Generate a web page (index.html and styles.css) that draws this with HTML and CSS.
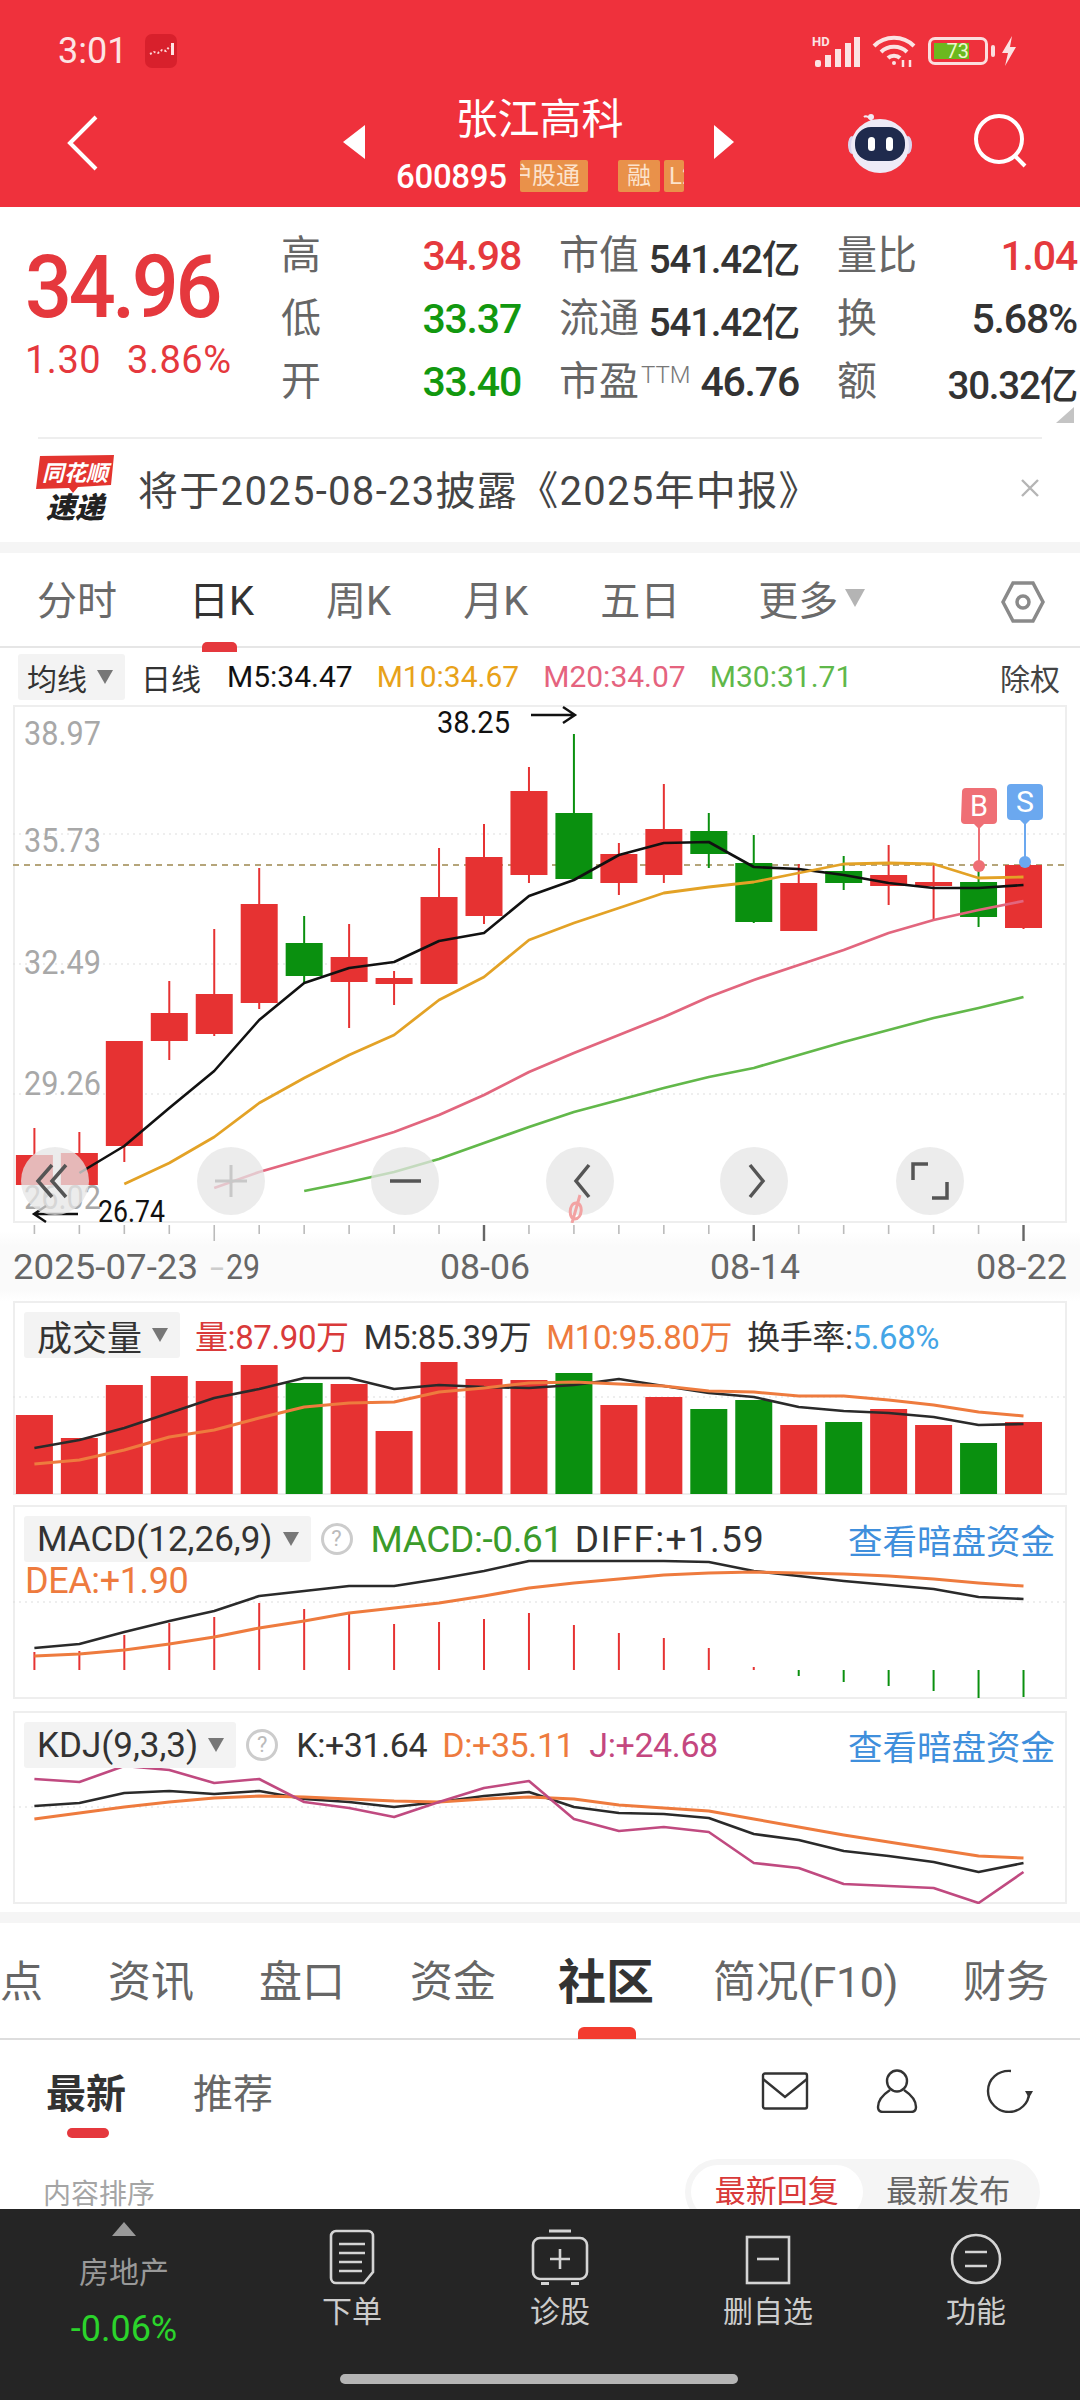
FILE: index.html
```html
<!DOCTYPE html>
<html lang="zh-CN">
<head>
  <meta charset="UTF-8">
  <meta name="viewport" content="width=device-width, initial-scale=1.0">
  <title>张江高科 600895</title>
  <link rel="stylesheet" href="styles.css">
</head>
<body>
  <div class="page">

    <div class="top">
      <div class="status">
        <span class="clock">3:01</span>
        <svg class="app-dot" width="32" height="34" viewBox="0 0 32 34">
          <rect width="32" height="34" rx="7" fill="#d8202c"/>
          <path d="M5 20l4-2 4 1 4-3 4 1 4-5" fill="none" stroke="#ffd5d5" stroke-width="2" stroke-dasharray="2 2"/>
          <rect x="26" y="9" width="3" height="12" fill="#ffe3e3"/>
        </svg>
        <div class="status-right">
          <svg width="48" height="32" viewBox="0 0 48 32">
            <text x="0" y="11" class="hd">HD</text>
            <rect x="3" y="25" width="6" height="7" rx="2" fill="#fbe3e3"/>
            <rect x="13" y="20" width="6" height="12" fill="#fbe3e3"/>
            <rect x="23" y="14" width="6" height="18" fill="#fbe3e3"/>
            <rect x="33" y="8" width="6" height="24" fill="#fbe3e3"/>
            <rect x="42" y="2" width="6" height="30" fill="#fbe3e3"/>
          </svg>
          <svg width="44" height="32" viewBox="0 0 44 32" fill="none" stroke="#fbe3e3" stroke-width="4">
            <path d="M2 11c11-11 29-11 40 0"/>
            <path d="M9 17c7-7 19-7 26 0"/>
            <path d="M16 23c3-3 9-3 12 0"/>
            <circle cx="22" cy="28" r="2" fill="#fbe3e3" stroke="none"/>
            <path d="M31 25v7M38 25v7" stroke-width="2.5"/>
          </svg>
          <div class="battery">
            <div class="battery-body"><span class="battery-fill">73</span></div>
            <span class="battery-cap"></span>
          </div>
          <svg class="bolt" width="16" height="30" viewBox="0 0 16 30">
            <path d="M11 0L1 17h6l-3 13L15 11H9z" fill="#fbe3e3"/>
          </svg>
        </div>
      </div>

      <div class="nav">
        <div class="nav-left">
          <svg width="32" height="56" viewBox="0 0 32 56" fill="none" stroke="#fff" stroke-width="4">
            <path d="M29 2L3 28l26 26"/>
          </svg>
        </div>
        <div class="nav-center">
          <span class="tri-left"></span>
          <div class="stock">
            <div class="stock-name">张江高科</div>
            <div class="stock-sub">
              <span class="stock-code">600895</span>
              <span class="badge badge-hgt">沪股通</span>
              <span class="badge badge-rong">融</span>
              <span class="badge badge-l">L2</span>
            </div>
          </div>
          <span class="tri-right"></span>
        </div>
        <div class="nav-right">
          <svg width="64" height="60" viewBox="0 0 64 60">
            <path d="M25 10c-3-6-7-8-9-6" fill="none" stroke="#f3e9f3" stroke-width="2"/>
            <circle cx="23" cy="4" r="3" fill="#f3e9f3"/>
            <ellipse cx="4" cy="32" rx="4" ry="9" fill="#d8d4ee"/>
            <ellipse cx="60" cy="32" rx="4" ry="9" fill="#d8d4ee"/>
            <ellipse cx="32" cy="33" rx="29" ry="27" fill="#eeeaf6"/>
            <rect x="7" y="14" width="50" height="34" rx="16" fill="#1f2a4d"/>
            <rect x="20" y="24" width="7" height="14" rx="3.5" fill="#fff"/>
            <rect x="38" y="24" width="7" height="14" rx="3.5" fill="#fff"/>
          </svg>
          <svg width="54" height="58" viewBox="0 0 54 58" fill="none" stroke="#fff" stroke-width="4">
            <circle cx="25" cy="26" r="23"/>
            <path d="M41 43l10 10"/>
          </svg>
        </div>
      </div>
    </div>

    <div class="quote">
      <div class="price-box">
        <div class="price">34.96</div>
        <div class="price-change"><span>1.30</span><span>3.86%</span></div>
      </div>
      <div class="stats">
        <div class="cell"><span class="lab">高</span><span class="val up">34.98</span></div>
        <div class="cell"><span class="lab">市值</span><span class="val val-yi">541.42亿</span></div>
        <div class="cell"><span class="lab">量比</span><span class="val up">1.04</span></div>
        <div class="cell"><span class="lab">低</span><span class="val down">33.37</span></div>
        <div class="cell"><span class="lab">流通</span><span class="val val-yi">541.42亿</span></div>
        <div class="cell"><span class="lab">换</span><span class="val">5.68%</span></div>
        <div class="cell"><span class="lab">开</span><span class="val down">33.40</span></div>
        <div class="cell"><span class="lab">市盈<sup class="ttm">TTM</sup></span><span class="val">46.76</span></div>
        <div class="cell"><span class="lab">额</span><span class="val val-yi">30.32亿</span></div>
      </div>
      <span class="corner"></span>
    </div>

    <div class="news">
      <svg class="news-logo" width="78" height="66" viewBox="0 0 78 66">
        <path d="M4 1l74-1-3 30-33 2-5 6-4-5-33 1z" fill="#e3342f"/>
        <text x="39" y="26" text-anchor="middle" class="logo-a">同花顺</text>
        <text x="39" y="63" text-anchor="middle" class="logo-b">速递</text>
      </svg>
      <div class="news-text">将于2025-08-23披露《2025年中报》</div>
      <svg width="20" height="20" viewBox="0 0 20 20" stroke="#b5b5b5" stroke-width="2.4">
        <path d="M2 2l16 16M18 2L2 18"/>
      </svg>
    </div>

    <div class="band"></div>

    <div class="tabs">
      <span class="tab">分时</span>
      <span class="tab active">日K</span>
      <span class="tab">周K</span>
      <span class="tab">月K</span>
      <span class="tab">五日</span>
      <span class="tab tab-more">更多<i class="drop drop-big"></i></span>
      <svg class="tab-gear" width="44" height="42" viewBox="0 0 44 42" fill="none" stroke="#8a8a8a" stroke-width="3.5">
        <path d="M12 2h20l10 19-10 19H12L2 21z"/>
        <circle cx="22" cy="21" r="6"/>
      </svg>
    </div>

    <div class="ma-row">
      <span class="picker ma-picker">均线<i class="drop"></i></span>
      <span class="ma-text ma-day">日线</span>
      <span class="ma-text ma5">M5:34.47</span>
      <span class="ma-text ma10">M10:34.67</span>
      <span class="ma-text ma20">M20:34.07</span>
      <span class="ma-text ma30">M30:31.71</span>
      <span class="ma-text ma-right">除权</span>
    </div>

    <!-- K line panel -->
    <div class="panel panel-price">
      <svg class="panel-svg" width="1054" height="518" viewBox="13 705 1054 518">
        <path class="grid-lines" d="M13 834H1067M13 964H1067M13 1094H1067"/>
        <path class="last-line" d="M13 865H1067"/>
        <g class="axis">
          <text x="24" y="745" textLength="77" lengthAdjust="spacingAndGlyphs">38.97</text>
          <text x="24" y="852" textLength="77" lengthAdjust="spacingAndGlyphs">35.73</text>
          <text x="24" y="974" textLength="77" lengthAdjust="spacingAndGlyphs">32.49</text>
          <text x="24" y="1095" textLength="77" lengthAdjust="spacingAndGlyphs">29.26</text>
          <text x="24" y="1209" textLength="77" lengthAdjust="spacingAndGlyphs">26.02</text>
        </g>
        <g id="candles"></g>
        <g id="priceLines"></g>

        <g class="note">
          <text x="437" y="733" textLength="73" lengthAdjust="spacingAndGlyphs">38.25</text>
          <path d="M531 715h43M563 707l12 8-12 8"/>
          <text x="98" y="1222" textLength="67" lengthAdjust="spacingAndGlyphs">26.74</text>
          <path d="M78 1214H34M46 1206l-12 8 12 8"/>
        </g>

        <g class="marker">
          <path d="M979 824V865" stroke="#ef6f75"/>
          <circle cx="979" cy="866" r="6" fill="#ef6f75"/>
          <path d="M962 792a4 4 0 0 1 4-4h27a4 4 0 0 1 4 4v28a4 4 0 0 1-4 4h-9l-5 5-5-5h-9a4 4 0 0 1-4-4z" fill="#ef6f75"/>
          <text x="979" y="816" textLength="18" lengthAdjust="spacingAndGlyphs" text-anchor="middle">B</text>
          <path d="M1025 820V860" stroke="#6ba8ef"/>
          <circle cx="1025" cy="862" r="6" fill="#6ba8ef"/>
          <path d="M1007 788a4 4 0 0 1 4-4h28a4 4 0 0 1 4 4v28a4 4 0 0 1-4 4h-9l-5 5-5-5h-9a4 4 0 0 1-4-4z" fill="#6ba8ef"/>
          <text x="1025" y="812" textLength="18" lengthAdjust="spacingAndGlyphs" text-anchor="middle">S</text>
        </g>

        <!-- zoom and pan buttons floating over the chart -->
        <g class="pad">
          <circle cx="55" cy="1181" r="34"/>
          <circle cx="231" cy="1181" r="34"/>
          <circle cx="405" cy="1181" r="34"/>
          <circle cx="580" cy="1181" r="34"/>
          <circle cx="754" cy="1181" r="34"/>
          <circle cx="930" cy="1181" r="34"/>
        </g>
        <g class="pad-icons">
          <path d="M52 1165l-14 16 14 16M66 1165l-14 16 14 16"/>
          <path class="pad-soft" d="M215 1181h32M231 1165v32"/>
          <path d="M390 1181h31"/>
          <path d="M589 1165l-13 16 13 16"/>
          <path d="M750 1165l13 16-13 16"/>
          <path d="M913 1180v-16h15M947 1182v16h-15"/>
        </g>
        <path class="pink-mark" d="M576 1203c-7 0-8 16-1 16s9-16 1-16zM580 1195l-8 28"/>
      </svg>
    </div>

    <svg class="time-axis" width="1080" height="78" viewBox="0 1223 1080 78">
      <g id="ticks"></g>
      <g class="dates">
        <text x="13" y="1279" textLength="185" lengthAdjust="spacingAndGlyphs">2025-07-23</text>
        <text x="210" y="1279" textLength="14" lengthAdjust="spacingAndGlyphs" class="dim">-</text>
        <text x="226" y="1279" textLength="34" lengthAdjust="spacingAndGlyphs">29</text>
        <text x="440" y="1279" textLength="90" lengthAdjust="spacingAndGlyphs">08-06</text>
        <text x="710" y="1279" textLength="90" lengthAdjust="spacingAndGlyphs">08-14</text>
        <text x="976" y="1279" textLength="91" lengthAdjust="spacingAndGlyphs">08-22</text>
      </g>
    </svg>

    <!-- volume -->
    <div class="panel panel-vol">
      <svg class="panel-svg" width="1054" height="194" viewBox="13 1301 1054 194">
        <path class="grid-lines" d="M13 1397H1067"/>
        <g id="volBars"></g>
        <g id="volLines"></g>
      </svg>
      <div class="panel-head">
        <span class="picker">成交量<i class="drop"></i></span>
        <span class="v-red">量:87.90万</span>
        <span class="v-dark">M5:85.39万</span>
        <span class="v-orange">M10:95.80万</span>
        <span class="v-dark">换手率:<b class="v-blue">5.68%</b></span>
      </div>
    </div>

    <div class="panel panel-macd">
      <svg class="panel-svg" width="1054" height="194" viewBox="13 1505 1054 194">
        <path class="grid-lines" d="M13 1602H1067"/>
        <g id="macdBars"></g>
        <g id="macdLines"></g>
      </svg>
      <div class="panel-head">
        <span class="picker">MACD(12,26,9)<i class="drop"></i></span>
        <span class="help">?</span>
        <span class="v-green">MACD:-0.61</span>
        <span class="v-dark">DIFF:+1.59</span>
        <span class="v-link">查看暗盘资金</span>
      </div>
      <div class="panel-sub v-orange">DEA:+1.90</div>
    </div>

    <div class="panel panel-kdj">
      <svg class="panel-svg" width="1054" height="193" viewBox="13 1711 1054 193">
        <path class="grid-lines" d="M13 1807H1067"/>
        <g id="kdjLines"></g>
      </svg>
      <div class="panel-head">
        <span class="picker">KDJ(9,3,3)<i class="drop"></i></span>
        <span class="help">?</span>
        <span class="v-dark">K:+31.64</span>
        <span class="v-orange">D:+35.11</span>
        <span class="v-pink">J:+24.68</span>
        <span class="v-link">查看暗盘资金</span>
      </div>
    </div>

    <div class="band band-low"></div>

    <div class="sections">
      <span>点</span>
      <span>资讯</span>
      <span>盘口</span>
      <span>资金</span>
      <span class="active">社区</span>
      <span class="sec-f10">简况(F10)</span>
      <span>财务</span>
    </div>

    <div class="community">
      <div class="comm-head">
        <span class="comm-tab active">最新</span>
        <span class="comm-tab">推荐</span>
        <div class="comm-icons">
          <svg width="48" height="38" viewBox="0 0 48 38" fill="none" stroke="#333" stroke-width="2.4">
            <rect x="2" y="1.5" width="44" height="35" rx="2"/>
            <path d="M2 7l22 18L46 7"/>
          </svg>
          <svg width="42" height="44" viewBox="0 0 42 44" fill="none" stroke="#333" stroke-width="2.4">
            <ellipse cx="21" cy="12" rx="10" ry="10.5"/>
            <path d="M14 21C8 25 2 31 2 38c0 3 2 5 5 5h28c3 0 5-2 5-5 0-7-6-13-12-17"/>
          </svg>
          <svg width="48" height="44" viewBox="0 0 48 44" fill="none" stroke="#333" stroke-width="2.4">
            <path d="M26 2C13 1 3 10 3 22s10 21 21 21c11 0 20-9 20-19"/>
            <path d="M40 22h8l-4 7z" fill="#333" stroke="none"/>
          </svg>
        </div>
      </div>
      <div class="comm-sort">
        <span class="sort-label">内容排序</span>
        <div class="segment">
          <span class="seg on">最新回复</span>
          <span class="seg">最新发布</span>
        </div>
      </div>
    </div>

    <div class="dock">
      <div class="dock-sector">
        <span class="dock-tri"></span>
        <span class="sector-name">房地产</span>
        <span class="sector-pct">-0.06%</span>
      </div>
      <div class="dock-item">
        <svg width="48" height="56" viewBox="0 0 48 56" fill="none" stroke="#d4d4d4" stroke-width="2.6">
          <path d="M8 2h32a5 5 0 0 1 5 5v36l-9 11H8a5 5 0 0 1-5-5V7a5 5 0 0 1 5-5z"/>
          <path d="M11 15h26M11 24h26M11 33h23M11 42h23"/>
        </svg>
        <span>下单</span>
      </div>
      <div class="dock-item">
        <svg width="58" height="56" viewBox="0 0 58 56" fill="none" stroke="#d4d4d4" stroke-width="2.6">
          <path d="M18 2h22" stroke-width="3"/>
          <rect x="2" y="9" width="54" height="41" rx="7"/>
          <path d="M29 20v20M19 30h20"/>
          <path d="M10 55h8M40 55h8" stroke-width="4"/>
        </svg>
        <span>诊股</span>
      </div>
      <div class="dock-item">
        <svg width="46" height="50" viewBox="0 0 46 50" fill="none" stroke="#d4d4d4" stroke-width="2.6">
          <rect x="2" y="2" width="42" height="46"/>
          <path d="M12 24h22"/>
        </svg>
        <span>删自选</span>
      </div>
      <div class="dock-item">
        <svg width="52" height="52" viewBox="0 0 52 52" fill="none" stroke="#d4d4d4" stroke-width="2.6">
          <circle cx="26" cy="26" r="24"/>
          <path d="M15 19h22M15 33h22"/>
        </svg>
        <span>功能</span>
      </div>
      <div class="home-bar"></div>
    </div>

  </div>

  <script>
    const NS = 'http://www.w3.org/2000/svg';
    const xAt = (i) => 34.4 + 44.96 * i;

    function add(parentId, tag, attrs) {
      const el = document.createElementNS(NS, tag);
      for (const k in attrs) el.setAttribute(k, attrs[k]);
      document.getElementById(parentId).appendChild(el);
    }

    function line(parentId, ys, color, width, start = 0) {
      const pts = ys.map((y, i) => `${xAt(i + start).toFixed(1)},${y}`).join(' ');
      add(parentId, 'polyline', { points: pts, fill: 'none', stroke: color, 'stroke-width': width, 'stroke-linejoin': 'round' });
    }

    const RED = '#e63232';
    const GREEN = '#0a900f';

    // [color, body top, body bottom, wick top, wick bottom]
    const candles = [
      ['r', 1155, 1185, 1128, 1185], ['r', 1153, 1185, 1132, 1185], ['r', 1041, 1146, 1041, 1162],
      ['r', 1013, 1041, 981, 1060], ['r', 994, 1034, 929, 1036], ['r', 904, 1003, 868, 1009],
      ['g', 943, 976, 916, 983], ['r', 957, 982, 924, 1028], ['r', 978, 984, 971, 1005],
      ['r', 897, 984, 848, 984], ['r', 857, 916, 824, 924], ['r', 791, 875, 767, 883],
      ['g', 813, 879, 734, 879], ['r', 854, 883, 843, 895], ['r', 829, 875, 784, 883],
      ['g', 831, 854, 813, 868], ['g', 863, 922, 835, 923], ['r', 883, 931, 864, 931],
      ['g', 871, 883, 856, 890], ['r', 875, 886, 845, 905], ['r', 882, 886, 863, 920],
      ['g', 882, 917, 867, 927], ['r', 865, 928, 865, 929]
    ];

    candles.forEach((c, i) => {
      const x = xAt(i);
      const color = c[0] === 'r' ? RED : GREEN;
      add('candles', 'path', { d: `M${x} ${c[3]}V${c[4]}`, stroke: color, 'stroke-width': 2 });
      add('candles', 'rect', { x: x - 18.5, y: c[1], width: 37, height: c[2] - c[1], fill: color });
    });

    line('priceLines', [1173, 1146, 1108, 1071, 1020, 983, 968, 962, 941, 933, 896, 880, 855, 843, 842, 867, 869, 875, 883, 888, 888, 885], '#111', 2.6, 1);
    line('priceLines', [1184, 1163, 1137, 1103, 1078, 1055, 1035, 1000, 977, 940, 923, 908, 893, 887, 882, 873, 864, 863, 864, 878, 877], '#e3a226', 2.8, 2);
    line('priceLines', [1188, 1172, 1159, 1146, 1132, 1115, 1095, 1072, 1053, 1035, 1017, 997, 980, 965, 950, 933, 920, 910, 901], '#e2667e', 2.8, 4);
    line('priceLines', [1191, 1182, 1172, 1159, 1143, 1127, 1112, 1100, 1088, 1077, 1068, 1055, 1042, 1030, 1018, 1008, 997], '#62b84a', 2.8, 6);

    candles.forEach((c, i) => {
      const major = i === 10 || i === 16 || i === 22;
      const tall = major || i === 4;
      add('ticks', 'path', {
        d: `M${xAt(i)} 1225v${tall ? 16 : 9}`,
        stroke: major ? '#666' : '#bbb',
        'stroke-width': major ? 2.4 : 1.6
      });
    });

    const volumes = [1415, 1438, 1385, 1376, 1381, 1365, 1383, 1384, 1431, 1362, 1379, 1380, 1373, 1405, 1397, 1409, 1400, 1425, 1422, 1409, 1425, 1443, 1422];
    const volUp = [1, 1, 1, 1, 1, 1, 0, 1, 1, 1, 1, 1, 0, 1, 1, 0, 0, 1, 0, 1, 1, 0, 1];
    volumes.forEach((top, i) => {
      add('volBars', 'rect', { x: xAt(i) - 18.5, y: top, width: 37, height: 1494 - top, fill: volUp[i] ? RED : GREEN });
    });
    line('volLines', [1448, 1440, 1428, 1413, 1398, 1389, 1378, 1378, 1389, 1385, 1387, 1388, 1385, 1379, 1386, 1393, 1397, 1407, 1411, 1413, 1417, 1425, 1424], '#2a2a2a', 2.6);
    line('volLines', [1464, 1460, 1450, 1437, 1430, 1418, 1407, 1403, 1402, 1392, 1388, 1383, 1382, 1384, 1386, 1391, 1392, 1396, 1396, 1400, 1405, 1412, 1416], '#ee7b3e', 3);

    const macd = [1652, 1651, 1635, 1623, 1617, 1603, 1609, 1614, 1624, 1622, 1619, 1613, 1625, 1633, 1638, 1648, 1667, 1676, 1682, 1686, 1691, 1698, 1697];
    macd.forEach((y, i) => {
      add('macdBars', 'path', { d: `M${xAt(i)} 1670V${y}`, stroke: y < 1670 ? RED : GREEN, 'stroke-width': 2 });
    });
    line('macdLines', [1648, 1644, 1632, 1621, 1611, 1596, 1591, 1586, 1586, 1579, 1571, 1561, 1561, 1561, 1561, 1562, 1571, 1576, 1581, 1585, 1589, 1597, 1599], '#2a2a2a', 2.6);
    line('macdLines', [1656, 1654, 1650, 1644, 1637, 1628, 1621, 1613, 1608, 1603, 1596, 1588, 1583, 1579, 1575, 1573, 1572, 1573, 1574, 1576, 1579, 1583, 1586], '#ee7b3e', 3);

    line('kdjLines', [1806, 1803, 1793, 1791, 1794, 1791, 1799, 1802, 1807, 1802, 1796, 1792, 1807, 1813, 1814, 1818, 1834, 1840, 1851, 1856, 1862, 1872, 1863], '#2a2a2a', 2.6);
    line('kdjLines', [1819, 1813, 1807, 1802, 1798, 1796, 1797, 1799, 1801, 1802, 1799, 1797, 1799, 1805, 1808, 1811, 1819, 1827, 1835, 1842, 1849, 1856, 1858], '#ee7b3e', 3);
    line('kdjLines', [1779, 1782, 1766, 1770, 1783, 1779, 1802, 1808, 1817, 1802, 1788, 1781, 1819, 1831, 1827, 1832, 1863, 1868, 1884, 1886, 1888, 1903, 1872], '#c04a80', 2.6);
  </script>
</body>
</html>
```

FILE: styles.css
```css
* {
  box-sizing: border-box;
}

body {
  margin: 0;
  background: #fff;
  font-family: Roboto, "Noto Sans CJK SC", sans-serif;
  color: #333;
}

.page {
  width: 1080px;
  height: 2400px;
  overflow: hidden;
  position: relative;
}

/* red header */
.top {
  height: 207px;
  background: #ef313c;
  color: #fff;
}

.status {
  height: 92px;
  display: flex;
  align-items: center;
  padding: 10px 63px 0 58px;
}

.clock {
  font-size: 36px;
  color: #fce4e4;
}

.app-dot {
  margin-left: 18px;
}

.status-right {
  margin-left: auto;
  display: flex;
  align-items: center;
  gap: 12px;
}

.bolt {
  margin-left: -6px;
}

.hd {
  font-size: 13px;
  font-weight: 700;
  fill: #fbe3e3;
}

.battery {
  display: flex;
  align-items: center;
  gap: 3px;
}

.battery-body {
  width: 60px;
  height: 28px;
  border: 3px solid #fbdede;
  border-radius: 7px;
  padding: 3px;
}

.battery-fill {
  display: block;
  width: 35px;
  height: 16px;
  background: #6cb81f;
  color: #eef8d0;
  font-size: 20px;
  line-height: 16px;
  text-align: right;
}

.battery-cap {
  width: 4px;
  height: 12px;
  border-radius: 2px;
  background: #fbdede;
}

.nav {
  height: 115px;
  display: grid;
  grid-template-columns: 343px 391px 1fr;
}

.nav-left {
  padding: 23px 0 0 67px;
}

.nav-center {
  display: flex;
  align-items: flex-start;
}

.tri-left,
.tri-right {
  width: 0;
  height: 0;
  margin-top: 33px;
  border-top: 17px solid transparent;
  border-bottom: 17px solid transparent;
}

.tri-left {
  border-right: 22px solid #fff;
}

.tri-right {
  border-left: 20px solid #fff;
}

.stock {
  width: 349px;
}

.stock-name {
  height: 52px;
  font-size: 42px;
  line-height: 56px;
  text-align: center;
}

.stock-sub {
  display: flex;
  align-items: center;
  height: 32px;
  margin-top: 16px;
  padding-left: 31px;
}

.stock-code {
  width: 124px;
  font-size: 33px;
  font-weight: 500;
  letter-spacing: -0.3px;
  color: #fff;
}

.badge {
  height: 32px;
  display: flex;
  justify-content: flex-end;
  overflow: hidden;
  white-space: nowrap;
  background: #e9914a;
  color: #fce3cd;
  font-size: 24px;
  line-height: 32px;
  border-radius: 2px;
}

.badge-hgt {
  width: 68px;
  padding-right: 8px;
}

.badge-rong {
  width: 42px;
  margin-left: 30px;
  justify-content: center;
}

.badge-l {
  width: 20px;
  margin-left: 4px;
  justify-content: flex-start;
  padding-left: 5px;
}

.nav-right {
  display: flex;
  align-items: flex-start;
  padding: 21px 0 0 114px;
  gap: 62px;
}

/* quote block */
.quote {
  height: 230px;
  position: relative;
  display: flex;
}

.price-box {
  width: 281px;
  padding: 36px 0 0 25px;
  color: #e5383d;
}

.price {
  font-size: 88px;
  font-weight: 500;
  line-height: 88px;
  letter-spacing: -3.6px;
  transform: scaleX(0.94);
  transform-origin: left;
}

.price-change {
  display: flex;
  gap: 26px;
  margin-top: 7px;
  font-size: 38px;
  line-height: 44px;
  letter-spacing: 0.5px;
}

.stats {
  display: grid;
  grid-template-columns: repeat(3, 240px);
  grid-auto-rows: 63px;
  column-gap: 38px;
  padding-top: 17px;
}

.cell {
  display: flex;
  justify-content: space-between;
  align-items: center;
  white-space: nowrap;
}

.lab {
  margin-bottom: 8px;
  font-size: 40px;
  color: #666;
}

.ttm {
  font-size: 24px;
  font-weight: 300;
  color: #777;
  vertical-align: 12px;
  line-height: 0;
  margin-left: 2px;
}

.val {
  font-size: 41px;
  font-weight: 500;
  letter-spacing: -1.2px;
  color: #333;
}

.val-yi {
  font-size: 38.5px;
}

.up {
  color: #e5393d;
}

.down {
  color: #12980f;
}

.corner {
  position: absolute;
  right: 6px;
  bottom: 14px;
  width: 0;
  height: 0;
  border-left: 18px solid transparent;
  border-bottom: 16px solid #c4c4c4;
}

.news {
  height: 105px;
  margin: 0 38px;
  border-top: 2px solid #eee;
  display: flex;
  align-items: center;
  padding: 0 2px 6px 0;
}

.news-logo {
  margin-left: -2px;
}

.logo-a {
  font-size: 22px;
  font-weight: 700;
  font-style: italic;
  fill: #fff;
}

.logo-b {
  font-size: 29px;
  font-weight: 900;
  font-style: italic;
  fill: #222;
}

.news-text {
  flex: 1;
  margin-left: 24px;
  font-size: 40px;
  letter-spacing: 1.3px;
  color: #444;
}

.band {
  height: 11px;
  background: #f5f5f5;
}

/* period tabs */
.tabs {
  height: 95px;
  display: flex;
  align-items: center;
  gap: 72px;
  padding: 4px 35px 0 37px;
  border-bottom: 2px solid #e6e6e6;
}

.tab {
  position: relative;
  font-size: 40px;
  line-height: 48px;
  color: #6a6a6a;
}

.tab.active {
  color: #333;
}

.tab.active::after {
  content: '';
  position: absolute;
  left: 13px;
  top: 64px;
  width: 35px;
  height: 10px;
  border-radius: 5px 5px 0 0;
  background: #e5383d;
}

.tab-more {
  margin-left: 6px;
}

.tab-gear {
  margin-left: auto;
}

.drop {
  display: inline-block;
  width: 0;
  height: 0;
  margin-left: 10px;
  vertical-align: 3px;
  border-left: 8px solid transparent;
  border-right: 8px solid transparent;
  border-top: 14px solid #777;
}

.drop-big {
  margin-left: 7px;
  vertical-align: 8px;
  border-left-width: 10px;
  border-right-width: 10px;
  border-top: 18px solid #b4b4b4;
}

.ma-row {
  height: 54px;
  display: flex;
  align-items: center;
  padding: 3px 20px 0 18px;
}

.picker {
  height: 46px;
  display: inline-flex;
  align-items: center;
  flex: none;
  padding: 0 12px 0 13px;
  background: #f3f3f3;
  color: #333;
  font-size: 35px;
  letter-spacing: 0;
  border-radius: 3px;
}

.ma-picker {
  width: 107px;
  padding-left: 9px;
  font-size: 30px;
}

.ma-picker .drop {
  margin-left: 10px;
}

.ma-text {
  font-size: 30px;
  margin-left: 24px;
}

.ma-day {
  margin-left: 16px;
  color: #333;
}

.ma5 {
  margin-left: 26px;
  color: #111;
}

.ma10 {
  color: #e8a21a;
}

.ma20 {
  color: #e5637e;
}

.ma30 {
  color: #5fb84a;
}

.ma-right {
  margin-left: auto;
  color: #444;
}

/* chart panels */
.panel {
  position: relative;
  width: 1054px;
  margin-left: 13px;
  border: 2px solid #eee;
}

.panel-price {
  height: 518px;
  margin-top: 3px;
}

.panel-vol,
.panel-macd {
  height: 194px;
}

.panel-macd {
  margin-top: 10px;
}

.panel-kdj {
  height: 193px;
  margin-top: 12px;
}

.panel-svg {
  position: absolute;
  left: -2px;
  top: -2px;
}

.grid-lines {
  fill: none;
  stroke: #ddd;
  stroke-width: 1.2;
  stroke-dasharray: 2 4;
}

.last-line {
  stroke: #b5a57a;
  stroke-width: 2;
  stroke-dasharray: 6 5;
}

.axis text {
  font-size: 34px;
  fill: #a8a8a8;
}

.note text {
  font-size: 32px;
  fill: #111;
}

.note path {
  fill: none;
  stroke: #111;
  stroke-width: 2.4;
}

.marker path[stroke] {
  stroke-width: 2;
}

.marker text {
  font-size: 30px;
  fill: #fff;
}

.pad circle {
  fill: rgba(230, 230, 230, 0.75);
}

.pad-icons path {
  fill: none;
  stroke: #555;
  stroke-width: 3.5;
}

.pad-icons .pad-soft {
  stroke: #c8c8c8;
  stroke-width: 3;
}

.pink-mark {
  fill: none;
  stroke: #f2a3a3;
  stroke-width: 3;
}

.time-axis {
  display: block;
  background: linear-gradient(#fff 10%, #fafafa 30%, #fafafa 85%, #fff);
}

.dates text {
  font-size: 35px;
  fill: #666;
}

.dates .dim {
  fill: #ccc;
}

.panel-head {
  position: relative;
  display: flex;
  align-items: center;
  height: 46px;
  margin: 9px 0 0 9px;
  gap: 15px;
  font-size: 33px;
  letter-spacing: -0.4px;
  white-space: nowrap;
}

.panel-macd .panel-head {
  font-size: 37px;
}

.panel-macd .v-dark {
  margin-left: -3px;
  letter-spacing: 1.3px;
}

.panel-kdj .panel-head {
  font-size: 34px;
}

.panel-macd .picker,
.panel-kdj .picker {
  font-size: 35px;
}

.panel-sub {
  position: relative;
  margin: 0 0 0 10px;
  font-size: 36px;
  line-height: 38px;
  letter-spacing: -0.4px;
}

.help {
  width: 32px;
  height: 32px;
  margin: 0 3px 0 -5px;
  border: 3px solid #ccc;
  border-radius: 50%;
  text-align: center;
  font-size: 22px;
  line-height: 26px;
  color: #bbb;
  letter-spacing: 0;
}

.v-red {
  color: #d93a3a;
}

.v-dark {
  color: #333;
}

.v-orange {
  color: #ee7b3e;
}

.v-blue {
  font-weight: 400;
  color: #45a5e6;
}

.v-green {
  color: #3b9b2a;
}

.v-pink {
  color: #c4477f;
}

.v-link {
  margin-left: auto;
  margin-right: 10px;
  font-size: 34.5px;
  letter-spacing: 0;
  color: #3f8fdc;
}

.band-low {
  margin-top: 8px;
}

/* section tabs */
.sections {
  height: 117px;
  display: flex;
  align-items: center;
  gap: 65px;
  border-bottom: 2px solid #ddd;
  font-size: 43px;
  color: #666;
  padding-bottom: 5px;
}

.sections .active {
  position: relative;
  margin: 0 -6px 0 -3px;
  font-size: 48px;
  font-weight: 700;
  color: #333;
}

.sections .sec-f10 {
  letter-spacing: -0.4px;
}

.sections .active::after {
  content: '';
  position: absolute;
  left: 20px;
  top: 84px;
  width: 58px;
  height: 12px;
  border-radius: 6px 6px 0 0;
  background: #f33c2f;
}

.community {
  height: 169px;
  overflow: hidden;
}

.comm-head {
  height: 102px;
  display: flex;
  align-items: center;
  gap: 67px;
  padding: 0 47px 0 46px;
}

.comm-tab {
  position: relative;
  font-size: 40px;
  color: #666;
}

.comm-tab.active {
  font-weight: 700;
  color: #333;
}

.comm-tab.active::after {
  content: '';
  position: absolute;
  left: 21px;
  top: 66px;
  width: 42px;
  height: 10px;
  border-radius: 5px;
  background: #e5383d;
}

.comm-icons {
  margin-left: auto;
  display: flex;
  align-items: center;
  gap: 67px;
}

.comm-sort {
  display: flex;
  justify-content: space-between;
  align-items: center;
  margin-top: 17px;
  padding: 0 40px 0 43px;
}

.sort-label {
  font-size: 28px;
  color: #a5a5a5;
}

.segment {
  width: 355px;
  height: 66px;
  display: flex;
  padding: 6px;
  border-radius: 33px;
  background: #f5f5f5;
}

.seg {
  flex: 1;
  text-align: center;
  font-size: 31px;
  line-height: 54px;
  color: #666;
}

.seg.on {
  background: #fff;
  border-radius: 27px;
  color: #d93a3a;
}

/* bottom dock */
.dock {
  height: 191px;
  background: #252525;
  display: grid;
  grid-template-columns: 248px repeat(4, 208px);
  position: relative;
}

.dock-sector {
  display: flex;
  flex-direction: column;
  align-items: center;
  padding-top: 13px;
}

.dock-tri {
  width: 0;
  height: 0;
  border-left: 12px solid transparent;
  border-right: 12px solid transparent;
  border-bottom: 14px solid #999;
}

.sector-name {
  margin-top: 17px;
  font-size: 30px;
  line-height: 40px;
  color: #999;
}

.sector-pct {
  margin-top: 15px;
  font-size: 36px;
  line-height: 42px;
  color: #2bd42b;
}

.dock-item {
  height: 123px;
  display: flex;
  flex-direction: column;
  align-items: center;
  justify-content: flex-end;
  font-size: 30px;
  line-height: 40px;
  color: #ccc;
}

.dock-item svg {
  margin-bottom: 7px;
}

.home-bar {
  position: absolute;
  left: 340px;
  top: 165px;
  width: 398px;
  height: 10px;
  border-radius: 5px;
  background: #b5b5b5;
}
```
